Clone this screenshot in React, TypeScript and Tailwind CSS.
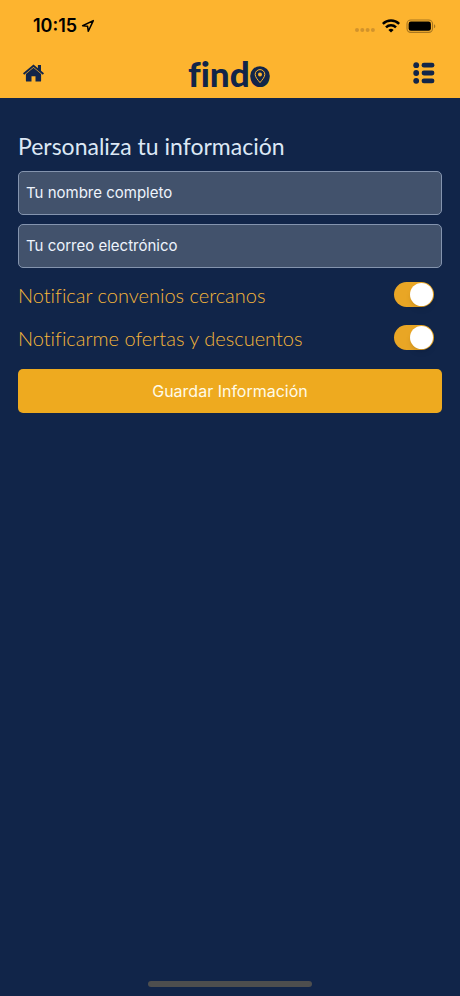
import { useState } from "react";

function StatusBar() {
  return (
    <div className="flex h-[51px] items-center justify-between pr-6 pl-[33px] text-black">
      <div className="flex items-center gap-1">
        <span className="font-['Inter',sans-serif] text-lg leading-6 font-semibold">10:15</span>
        <svg viewBox="0 0 14 14" className="h-[14px] w-[14px]" fill="none" stroke="currentColor" strokeWidth="1.5" strokeLinejoin="round">
          <path d="M12.3 1.6 1.6 6.7l5 .6.7 5z" />
        </svg>
      </div>
      <div className="flex items-center gap-[6px]">
        <svg viewBox="0 0 22 14" className="h-[14px] w-[22px]" fill="#d2932b">
          <circle cx="3" cy="11" r="2" />
          <circle cx="8.3" cy="11" r="2" />
          <circle cx="13.6" cy="11" r="2" />
          <circle cx="18.9" cy="11" r="2" />
        </svg>
        <svg viewBox="0 0 18 14" className="h-[14px] w-[18px]" fill="none" stroke="currentColor" strokeWidth="2.5">
          <path d="M.8 4.9a11.6 11.6 0 0 1 16.4 0" />
          <path d="M4 8.3a7.1 7.1 0 0 1 10 0" />
          <path d="M9 13.6 6.4 11a3.7 3.7 0 0 1 5.2 0z" fill="currentColor" stroke="none" />
        </svg>
        <svg viewBox="0 0 30 14" className="h-[14px] w-[30px]">
          <rect x="1" y="1" width="25.5" height="12.4" rx="3.8" fill="none" stroke="#a87620" strokeWidth="1.1" />
          <rect x="2.6" y="2.6" width="22.3" height="9.2" rx="2.3" fill="#000" />
          <path d="M28 5.2c1.8.7 1.8 3.3 0 4z" fill="#a87620" />
        </svg>
      </div>
    </div>
  );
}

function Logo() {
  return (
    <div className="relative font-['Lato',sans-serif] text-[35px] leading-9 font-black [font-variant-ligatures:none]">
      findo
      <svg viewBox="0 0 20 20" className="absolute right-0 bottom-[5px] h-5 w-5" fill="none">
        <circle cx="10" cy="10" r="9.8" fill="#122549" />
        <path d="M10 16.6C7.6 13.6 5.2 11 5.2 8.4a4.8 4.8 0 0 1 9.6 0c0 2.6-2.4 5.2-4.8 8.2z" stroke="#fdb42f" strokeWidth="1" />
        <circle cx="10" cy="8.4" r="2" fill="#fdb42f" />
      </svg>
    </div>
  );
}

function NavBar() {
  return (
    <nav className="grid h-[47px] grid-cols-[1fr_auto_1fr] items-center pr-[25px] pb-[3px] pl-[23px] text-[#122549]">
      <button type="button" aria-label="Inicio" className="justify-self-start">
        <svg viewBox="0 0 21 18" className="block h-[18px] w-[21px]" fill="currentColor">
          <path d="M10.5.5 0 9.3l1.2 1.4 9.3-7.7 9.3 7.7L21 9.3l-3-2.5V.9h-3.1v3.3z" />
          <path d="m10.5 3.7-7.6 6.3v6.7c0 .5.4.9.9.9h4.7v-5.3h4v5.3h4.7c.5 0 .9-.4.9-.9V10z" />
        </svg>
      </button>
      <Logo />
      <button type="button" aria-label="Menú" className="justify-self-end">
        <svg viewBox="0 0 22 22" className="block h-[22px] w-[22px]" fill="currentColor">
          <circle cx="3.2" cy="3.2" r="2.9" />
          <circle cx="3.2" cy="11" r="2.9" />
          <circle cx="3.2" cy="18.8" r="2.9" />
          <rect x="8.6" y="0.8" width="12.8" height="4.8" rx="2.3" />
          <rect x="8.6" y="8.6" width="12.8" height="4.8" rx="2.3" />
          <rect x="8.6" y="16.4" width="12.8" height="4.8" rx="2.3" />
        </svg>
      </button>
    </nav>
  );
}

function Field({ label, type }: { label: string; type: string }) {
  return (
    <input
      type={type}
      aria-label={label}
      placeholder={label}
      className="h-11 w-full rounded-[5px] border border-[#8494ae] bg-[#42526c] px-[7px] pb-[2px] font-['Inter',sans-serif] text-[15px] text-[#eef4fc] outline-none placeholder:text-[#eef4fc]"
    />
  );
}

function ToggleRow({ label }: { label: string }) {
  const [on, setOn] = useState(true);
  return (
    <label className="flex h-[43px] items-center justify-between pr-2 font-['Lato',sans-serif] text-xl font-light [font-variant-ligatures:none] text-[#f5b63a]">
      {label}
      <input
        type="checkbox"
        role="switch"
        checked={on}
        onChange={() => setOn(!on)}
        className="flex h-[25px] w-10 appearance-none items-center rounded-full bg-[#42526c] px-px before:h-[23px] before:w-[23px] before:rounded-full before:bg-white before:shadow-md before:content-[''] checked:justify-end checked:bg-[#e9a625]"
      />
    </label>
  );
}

export default function App() {
  return (
    <div className="flex min-h-screen flex-col bg-[#112549]">
      <header className="bg-[#fdb42f]">
        <StatusBar />
        <NavBar />
      </header>
      <main className="flex-1 px-[18px] pt-8">
        <form onSubmit={(e) => e.preventDefault()}>
          <h1 className="font-['Lato',sans-serif] text-[23px] leading-8 font-normal text-[#dce8f5]">
            Personaliza tu información
          </h1>
          <div className="mt-[9px] flex flex-col gap-[9px]">
            <Field label="Tu nombre completo" type="text" />
            <Field label="Tu correo electrónico" type="email" />
          </div>
          <div className="mt-[5px]">
            <ToggleRow label="Notificar convenios cercanos" />
            <ToggleRow label="Notificarme ofertas y descuentos" />
          </div>
          <button
            type="submit"
            className="mt-[10px] h-11 w-full rounded-[5px] bg-[#eeaa1f] font-['Inter',sans-serif] text-base text-[#fffbe8]"
          >
            Guardar Información
          </button>
        </form>
      </main>
      <footer className="flex justify-center pb-[9px]">
        <div className="h-[6px] w-[164px] rounded-full bg-[#4d4e4e]" />
      </footer>
    </div>
  );
}
